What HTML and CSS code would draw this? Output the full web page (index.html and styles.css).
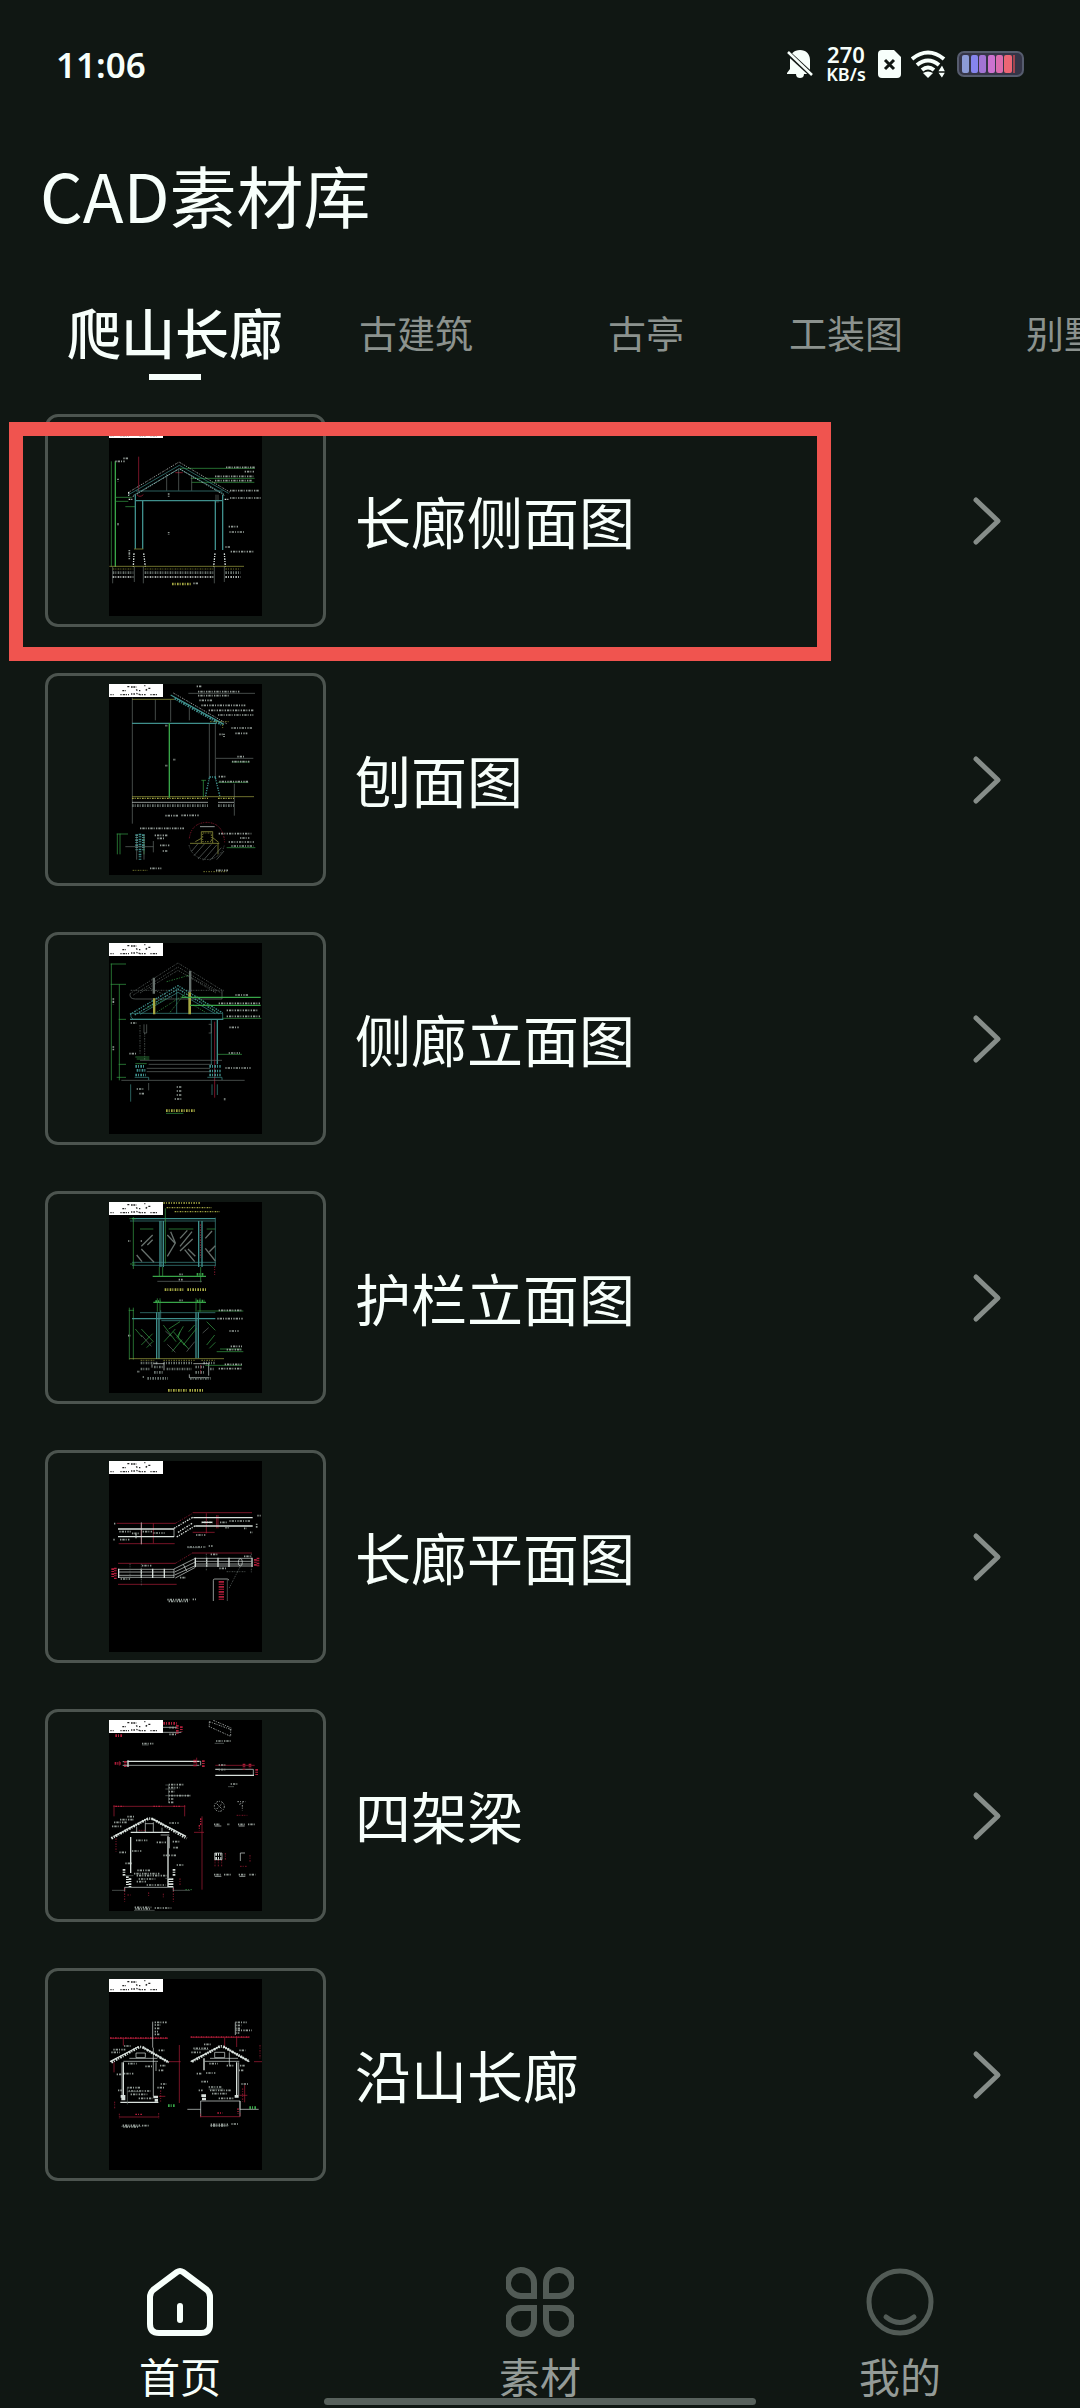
FILE: index.html
```
<!DOCTYPE html>
<html lang="zh-CN">
<head>
  <meta charset="UTF-8">
  <meta name="viewport" content="width=device-width, initial-scale=1.0">
  <title>CAD素材库</title>
  <link rel="stylesheet" href="styles.css">
</head>
<body>
  <svg class="defs" aria-hidden="true">
    <symbol id="stamp" viewBox="0 0 162 39">
      <rect width="162" height="39" fill="#fff"/>
      <path d="M55 8h8M66 9h16M106 5h3M40 20h10M82 16l4 6M90 20h4M110 19l6-4M118 13h8" stroke="#222" stroke-width="4" stroke-dasharray="5 2"/>
      <path d="M4 32h10M34 32h26M66 30h12M82 28l14 5M98 32h12M124 32h22" stroke="#333" stroke-width="4" stroke-dasharray="4 3 7 2"/>
    </symbol>
    <symbol id="arrow" viewBox="0 0 32 52">
      <path d="M5 5l22 21L5 47" fill="none" stroke="currentColor" stroke-width="5" stroke-linecap="round" stroke-linejoin="round"/>
    </symbol>
  </svg>

  <div class="status">
    <span class="time">11:06</span>
    <div class="status-icons">
      <svg class="bell" viewBox="0 0 26 30">
        <path d="M13 1c-6 0-10 4-10 10v9L0 24v1h9c0 3 2 4 4 4s4-1 4-4h6V11C23 5 19 1 13 1z" fill="#f7fffb"/>
        <path d="M-1 2l27 25" stroke="#101713" stroke-width="5"/>
        <path d="M1 3l24 23" stroke="#f7fffb" stroke-width="2.5"/>
      </svg>
      <div class="speed"><span>270</span><span class="unit">KB/s</span></div>
      <svg class="sim" viewBox="0 0 23 28">
        <path d="M4 0h12l7 7v17q0 4-4 4H4q-4 0-4-4V4q0-4 4-4z" fill="#f7fffb"/>
        <path d="M7 10l9 9M16 10l-9 9" stroke="#101713" stroke-width="3"/>
      </svg>
      <svg class="wifi" viewBox="0 0 36 28">
        <g fill="none" stroke="#f7fffb" stroke-width="4">
          <path d="M1 9q16-13 32 0"/>
          <path d="M6 15q11-9 22 0"/>
          <path d="M11 20q6-5 12 0"/>
        </g>
        <path d="M12 23q5-3 10 0l-5 5z" fill="#f7fffb"/>
        <path d="M26 22h9l-4-8zM26 22h9l-4 7z" fill="#f7fffb" stroke="#101713" stroke-width="1.5"/>
      </svg>
      <svg class="battery" viewBox="0 0 67 26">
        <rect x="1" y="1" width="65" height="24" rx="6" fill="#353547" stroke="#565c6e" stroke-width="2"/>
        <rect x="5" y="4" width="7" height="18" rx="2" fill="#8c9bd6"/>
        <rect x="14" y="4" width="7" height="18" rx="2" fill="#8585ee"/>
        <rect x="22" y="4" width="7" height="18" rx="2" fill="#a274d4"/>
        <rect x="31" y="4" width="7" height="18" rx="2" fill="#cc72d0"/>
        <rect x="39" y="4" width="7" height="18" rx="2" fill="#db6cae"/>
        <rect x="47" y="4" width="8" height="18" rx="2" fill="#ed6674"/>
        <rect x="56" y="4" width="2" height="18" fill="#a34450"/>
      </svg>
    </div>
  </div>

  <h1>CAD素材库</h1>

  <nav class="tabs">
    <button type="button" class="tab active">爬山长廊</button>
    <button type="button" class="tab">古建筑</button>
    <button type="button" class="tab">古亭</button>
    <button type="button" class="tab">工装图</button>
    <button type="button" class="tab">别墅</button>
  </nav>

  <main class="list">
    <a href="#" class="item">
      <span class="thumb">
        <svg viewBox="327 75 459 573">
          <rect x="327" y="75" width="459" height="573"/>
          <use href="#stamp" x="327" y="75" width="162" height="39"/>
          <path class="green bold" d="M346 184v316"/>
          <path class="green" d="M334 184v316M540 205h225M572 235h192M575 247h188M345 292h50M345 304h40M376 320h30"/>
          <path class="red" d="M416 170v104M526 218h22M410 284q10 10 20 0"/>
          <path class="gray" d="M500 222v50M536 210v62M575 226v46M648 284v24M654 284v24M338 500v50M403 500v46M430 500v50M643 500v50M673 500v46"/>
          <path class="teal" d="M386 284l152-88 148 84M400 286l138-80 134 76M408 273h260"/>
          <path class="white dots" d="M384 278l153-92 152 90M398 290l139-84 136 80"/>
          <path class="teal bold" d="M406 302h262M406 284v162M428 304v142M646 304v146M668 284v166"/>
          <path class="white dots bold" d="M386 276v14M386 298h14M674 298h14M402 460l-2 40M431 460l5 40M645 460l-4 40M673 460l3 40"/>
          <path class="yellow" d="M328 499h404M402 447h28"/>
          <path class="yellow dots" d="M338 507h62M434 507h206M676 507h46"/>
          <path class="gray dots wide" d="M338 518h62M434 518h206M676 518h46"/>
          <path class="white dots bold" d="M338 531h62M434 531h206M676 531h46"/>
          <path class="note" d="M678 202h87M734 215h30M645 229h115M645 242h110M690 272h88M690 294h92M686 380h30M688 396h44M676 441h14M692 455h68M370 175h14M346 184h30M354 236v8M354 370v8M388 450v30M506 280v10M506 396v8"/>
          <path class="yellow dots wide" d="M516 552h56"/>
          <path class="note" d="M580 550h14"/>
        </svg>
      </span>
      <span class="name">长廊侧面图</span>
      <svg class="arrow"><use href="#arrow"/></svg>
    </a>

    <a href="#" class="item">
      <span class="thumb">
        <svg viewBox="207 57 459 573">
          <rect x="207" y="57" width="459" height="573"/>
          <use href="#stamp" x="207" y="57" width="162" height="39"/>
          <path class="gray" d="M277 98v378M346 104v62M392 104v66M448 128v38M508 176v160M526 176v160M583 356v96M445 85h200M528 280h112"/>
          <path class="yellow" d="M276 103h126M276 395h366"/>
          <path class="teal bold" d="M276 175h254M392 90l160 88"/>
          <path class="teal dots wide" d="M404 100l140 78"/>
          <path class="white dots" d="M400 84l160 92"/>
          <path class="green bold" d="M388 174v224"/>
          <path class="green" d="M490 346v50M484 346h14M535 352h90M575 291h54M560 548h86"/>
          <path class="yellow dots bold" d="M276 400h228M534 400h48"/>
          <path class="white" d="M276 412h228M534 412h48"/>
          <path class="gray dots wide" d="M276 422h228M534 422h48"/>
          <path class="teal dots bold" d="M508 338l-12 58M526 338l14 58M508 336h20"/>
          <path class="note" d="M470 64h16M474 80h126M474 92h96M478 106h38M484 121h132M506 136h134M534 150h106M574 189h62M586 205h36M538 208h10M576 290h52M592 275h20M536 335h20M538 350h86M552 206v10M376 182h8M376 302h8M400 284h8"/>
          <path class="yellow dots" d="M510 170h56M548 178v14"/>
          <path class="note" d="M376 452h40M424 451h52M300 490h132M344 511h38M352 520h22M360 541h30M368 558h14M536 506h98M600 519h30M566 531h78M574 543h66"/>
          <path class="green" d="M232 506v62M240 506v62M230 507h34M312 514v54"/>
          <path class="teal dots wide" d="M290 508v48M300 506v78M310 508v48"/>
          <path class="gray" d="M256 545h84M340 528v34M290 508v76M312 508v76"/>
          <path class="yellow" d="M450 535h88M484 534v-34h34v34M534 534v34M466 530l18-10M536 532l-18-14"/>
          <path class="yellow dots" d="M488 504h26v26h-26zM278 616h46M490 620h70"/>
          <path class="white" d="M480 485h44"/>
          <path class="gray" d="M454 560l20-24M462 572l32-36M474 582l40-44M490 586l40-46M510 586l34-38M530 584l22-26"/>
          <path class="gray dots" d="M447 540a54 54 0 0 0 106 0"/>
          <path class="red dots" d="M448 520q6-46 52-48 50 2 54 60"/>
          <path class="note" d="M330 610h34M528 616h36"/>
        </svg>
      </span>
      <span class="name">刨面图</span>
      <svg class="arrow"><use href="#arrow"/></svg>
    </a>

    <a href="#" class="item">
      <span class="thumb">
        <svg viewBox="207 54 459 573">
          <rect x="207" y="54" width="459" height="573"/>
          <use href="#stamp" x="207" y="54" width="162" height="39"/>
          <path class="green" d="M214 116v350M238 178v288M212 117h46M212 178h46M236 283h22M236 418h22M230 457h28"/>
          <path class="gray dots" d="M270 206l144-92 136 84M280 210l134-84 130 78M300 204l114-68 114 68M272 196h280M330 190l70 30M440 150l90 50"/>
          <path class="gray" d="M270 206q-2 16 16 16h260v-24"/>
          <path class="gray bold" d="M340 158v48M343 158v48M449 138v64M452 138v64"/>
          <path class="teal dots bold" d="M270 268l144-86 134 82M284 270l130-78 124 74"/>
          <path class="teal" d="M300 268l114-66 112 64M272 265h276v18H280q-10-4-8-18M410 190v76"/>
          <path class="green dots" d="M320 250l60-30M350 262l90-58M390 262l40-50M470 214l60 48M380 170l70-20M460 240l40 24"/>
          <path class="yellow bold" d="M341 220v48M344 220v48M447 202v66M451 202v66"/>
          <path class="green bold" d="M424 217h238M450 241h212"/>
          <path class="green" d="M548 280h116M534 388h72"/>
          <path class="teal bold" d="M270 283h280M532 284v134"/>
          <path class="teal" d="M514 284v136"/>
          <path class="red" d="M524 290v228"/>
          <path class="gray" d="M320 298v26h-8v-26M506 298h8v26h-8M300 406h246M326 418h190M320 430h190M320 440h190M244 466h370M326 474v22"/>
          <path class="gray dots" d="M300 300v90M314 324v80"/>
          <path class="teal dots wide" d="M286 424h30M290 436h28M286 450h32M508 424h34M508 438h34M508 450h34"/>
          <path class="teal" d="M284 457h42v8M502 457h44v8M272 478v52M516 478v32M532 478v32"/>
          <path class="green" d="M286 396h42M290 402h38M286 416h34"/>
          <path class="note" d="M586 210h38M536 235h126M560 256h94M560 274h102M568 307h30M566 384h34M556 429h78M410 486h16M410 498h16M410 510h16M404 522h22M290 492h24M298 506h14M268 386h20M272 294h18M554 520v8M220 220v18M220 364v12"/>
          <path class="yellow dots wide" d="M378 557h90"/>
          <path class="green" d="M378 565h52"/>
        </svg>
      </span>
      <span class="name">侧廊立面图</span>
      <svg class="arrow"><use href="#arrow"/></svg>
    </a>

    <a href="#" class="item">
      <span class="thumb">
        <svg viewBox="207 51 459 573">
          <rect x="207" y="51" width="459" height="573"/>
          <use href="#stamp" x="207" y="51" width="162" height="39"/>
          <path class="yellow dots bold" d="M370 54h110M380 68h136M404 80h136"/>
          <path class="teal bold" d="M276 101h250M360 108v138M370 108v138M476 108v138M486 108v138"/>
          <path class="teal" d="M270 108h256M276 232h250M276 241h250M365 108v138M526 98v146"/>
          <path class="green" d="M280 96v156M268 101h20M376 70v166M270 237h16M300 132h40M386 132h74M500 132h26"/>
          <path class="gray bold" d="M304 184l34-34M304 192l38 40M322 180l16-16M392 140l14 34-24 40M382 150l24 26M420 160l22-24M420 184l36-44M420 198l38-36M434 194l30 36M444 192l22 22M496 160l20-22M496 190l30 38M508 200l18-18M290 210l16 20"/>
          <path class="green bold" d="M338 274h160M340 352h158"/>
          <path class="green" d="M358 246v30M368 246v30M482 246v46M352 340v40M360 340v40M468 340v40M480 340v40M268 368v156M280 368v156M266 376h16"/>
          <path class="gray" d="M352 289h134"/>
          <path class="green dots wide" d="M470 268h20M346 350h16M470 348h24"/>
          <path class="yellow dots wide" d="M374 314h60M442 314h60M384 616h56M448 616h44"/>
          <path class="teal bold" d="M276 401h250M350 382v140M357 382v140M468 382v138M475 382v138"/>
          <path class="teal" d="M300 383h226M362 376v24M364 407h108"/>
          <path class="green" d="M304 432l36 38M304 480l34-34M320 488l18-18M370 420l38 50M372 470l34-38M386 432l34-22M396 500l30-36M400 440l46 52M420 440l-6 20 24 24M430 424l-20 34M446 440l18-20M430 480l40-50M500 410l26 26M500 480l24-30M508 490l18-18M286 432l20 24"/>
          <path class="gray" d="M304 450l30 34M376 438l18 16M440 500l24-30M382 478l24 24M488 444l18-16"/>
          <path class="yellow" d="M268 521h284"/>
          <path class="yellow dots" d="M302 526h44M370 526h94M484 526h40"/>
          <path class="gray dots wide" d="M302 534h50M370 534h90M490 534h34M302 552h28M380 552h76M510 552h14"/>
          <path class="white" d="M336 538v10M340 536h32v20M460 536h46v36M448 568v10h60"/>
          <path class="gray dots wide" d="M342 546h28M342 562h28M322 580h62M466 546h30M466 562h30M450 580h62"/>
          <path class="green" d="M472 378h138M530 500h80M496 541h110M540 492h64"/>
          <path class="note" d="M536 376h70M532 401h76M568 438h30M572 484h34M560 494h44M554 538h52M536 551h70M418 268h10M416 284h12M418 346h10M264 168h8M302 168h6M264 452h8M292 560h8M308 576h4"/>
          <path class="red dots" d="M482 118v100M524 244v30M482 540v30"/>
        </svg>
      </span>
      <span class="name">护栏立面图</span>
      <svg class="arrow"><use href="#arrow"/></svg>
    </a>

    <a href="#" class="item">
      <span class="thumb">
        <svg viewBox="207 48 459 573">
          <rect x="207" y="48" width="459" height="573"/>
          <use href="#stamp" x="207" y="48" width="162" height="39"/>
          <path class="red" d="M230 235h176M458 203h178M236 296h168M458 262h66M234 355h172M234 418h176M456 324h180M304 235v60M340 235v60M499 205v60M530 210v40M534 210v40"/>
          <path class="red dots" d="M406 235l52-30M406 355l50-30"/>
          <path class="white bold" d="M234 252h168M234 275h168M460 218h178M466 243h172"/>
          <path class="white dots bold" d="M402 250l58-34M410 276l56-34M414 262l44-28"/>
          <path class="white" d="M402 252v24M304 232v66"/>
          <path class="note" d="M238 260h34M276 265h24M308 260h30M340 264h34M240 284h30M288 268v12M484 232h34M540 232h24M568 228h64M556 248h10M612 250h8M468 270h28M222 236h6M220 284h6M652 212h10M650 236v12M630 262h8"/>
          <path class="white bold" d="M486 232h30"/>
          <path class="note" d="M442 306h56M506 303h12"/>
          <path class="gray" d="M442 308h40"/>
          <path class="white" d="M234 373h168M234 381h168M234 391h168M234 397h168M464 340h172M464 349h172M464 357h172M464 363h172"/>
          <path class="white bold" d="M236 371v28M304 371v28M338 371v28M373 371v28M466 338v28M500 338v28M534 338v28M567 338v28M636 338v28"/>
          <path class="white" d="M402 372l64-32M404 381l62-30M404 390l62-28M406 399l60-32M402 372v26M430 358l10 20"/>
          <ellipse class="white" cx="601" cy="352" rx="6" ry="11"/>
          <path class="gray dots" d="M270 356v46M304 356v66M499 326v50M634 326v60M600 366l-34 66M560 380h60"/>
          <path class="note" d="M306 362h30M512 328h20M242 402h28M420 398h18M538 370h24M612 334h22"/>
          <path class="red dots wide" d="M218 370v30M226 368v34M654 338v30M646 342v20"/>
          <path class="white" d="M520 468v-62q0-4 4-4h38q4 0 4 4"/>
          <path class="gray" d="M562 404v64"/>
          <path class="red dots wide" d="M540 408v60M548 408v60"/>
          <path class="note" d="M382 464h66M386 469h58M458 463h10"/>
        </svg>
      </span>
      <span class="name">长廊平面图</span>
      <svg class="arrow"><use href="#arrow"/></svg>
    </a>

    <a href="#" class="item">
      <span class="thumb">
        <svg viewBox="207 45 459 573">
          <rect x="207" y="45" width="459" height="573"/>
          <use href="#stamp" x="207" y="45" width="162" height="39"/>
          <path class="white" d="M368 67h44M368 82h56"/>
          <path class="red dots wide" d="M370 55h40M412 60v26M424 64v16M226 92h22"/>
          <path class="note" d="M306 116h34M388 68h20M388 88h24M528 108h44"/>
          <path class="gray" d="M524 115h28M306 120h20"/>
          <path class="white dots" d="M508 50l66 24M506 64l66 30M508 50v14M572 72v22M520 46l56 24"/>
          <path class="white bold" d="M266 169h212M526 211h116M264 166v20"/>
          <path class="white" d="M248 170h18M248 181h230M478 169h4v12M526 193h114v18M526 193h12"/>
          <path class="red dots wide" d="M224 175h18M256 168v18M464 164v20M490 166v20M612 176v18M630 176v16M650 192v18"/>
          <path class="red" d="M526 181h118M238 168v14M470 158v26"/>
          <path class="note" d="M536 180h20M536 194h20M572 237h20"/>
          <path class="gray" d="M564 245h18M376 240h10v54M376 252h30M376 272h74"/>
          <path class="note" d="M386 239h46M386 248h32M386 260h18M386 272h66M386 282h16M386 292h16"/>
          <path class="red" d="M220 304h216M222 300v34M434 300v34M486 334v220M462 382h30"/>
          <path class="red dots bold" d="M226 304h24M340 304h24M400 304h20M482 340v20M478 360v16"/>
          <path class="white dots wide" d="M214 400l104-56q12-6 24 0l98 56"/>
          <path class="white bold" d="M222 394l98-52M334 340l104 54"/>
          <path class="white bold" d="M272 382h116M384 394v152M272 396v108"/>
          <path class="white" d="M316 352v30M340 352v30M316 356h24M290 366v16M366 368v14M362 390h26M388 396v34M254 547h146M254 547v12M400 547v12"/>
          <path class="note" d="M262 335h24M240 344h42M222 352h38M216 364h30M388 354h28M288 406h34M350 412h28M398 410h24M238 442h20M276 438h30M400 428h16M370 451h38M410 480h22M256 475h24M292 496h40M282 506h76M290 512h90M296 522h50M290 530h28M320 540h56"/>
          <path class="red dots" d="M228 400v40M254 550v40M400 550v40M262 570h10M326 562v14M370 566v12M420 520v20M296 376h20"/>
          <path class="white dots wide" d="M252 492v20M402 492v20M262 514v30M270 520v26M388 520v26M396 520v26"/>
          <path class="gray" d="M216 556h38M400 556h50M252 512h28M376 520h20M282 616h62"/>
          <path class="green dots" d="M436 554h20"/>
          <path class="note" d="M284 607h50M286 612h44M344 609h50"/>
          <circle class="white dots" cx="538" cy="304" r="15"/>
          <path class="white dots" d="M530 296l16 16M530 312l16-16M592 290h24M598 298l14-6M607 300v16"/>
          <path class="red dots" d="M590 331h32M525 464v22M535 464v22M545 464v22M556 444v20M600 484h20M630 450v20"/>
          <path class="note" d="M522 358h18M562 358h8M594 358h20M624 358h20M522 509h22M552 509h20M596 509h20M628 509h18"/>
          <path class="white dots wide" d="M526 448h18M526 460h18"/>
          <path class="white" d="M524 444h22v20h-22zM601 444v24M601 444h14M524 363h20M596 363h18M524 514h20M598 514h18"/>
        </svg>
      </span>
      <span class="name">四架梁</span>
      <svg class="arrow"><use href="#arrow"/></svg>
    </a>

    <a href="#" class="item">
      <span class="thumb">
        <svg viewBox="207 42 459 573">
          <rect x="207" y="42" width="459" height="573"/>
          <use href="#stamp" x="207" y="42" width="162" height="39"/>
          <path class="red" d="M210 220h174M452 217h176M418 240v174M386 290h36M250 222v20M554 218v30M590 218v28M642 290h26M238 456h120M480 455h120M614 360v52M222 292v30M356 394h20M598 391h24"/>
          <path class="red dots bold" d="M210 219h174M452 216h176M286 448h20M532 444h16M594 430v16"/>
          <path class="white" d="M338 170v78M586 172v38"/>
          <path class="note" d="M344 172h36M344 180h18M344 190h16M344 200h10M344 208h14M586 172h34M586 181h18M586 190h14M586 196h50M586 204h12"/>
          <path class="white dots wide" d="M214 292l80-44q8-4 16 0l76 44M456 290l80-44q8-4 16 0l74 42"/>
          <path class="white bold" d="M210 290l84-44M308 246l78 46M452 290l84-44M552 246l76 44"/>
          <path class="white" d="M268 280h84M250 289h104M288 264h28v14h-28zM510 280h84M494 289h104M524 262h30v16h-30z"/>
          <path class="white bold" d="M250 292v100M241 412h114M492 280v36M590 292v98"/>
          <path class="white" d="M340 248v146M348 292v26M246 292v100M596 292v98M568 262v38M482 408h118v46M482 408v46M600 408v26M442 433h40M600 433h56"/>
          <path class="white wide" d="M242 394h14M244 402h12M340 396h14M344 406h10M484 392h14M486 402h12M584 394h12"/>
          <path class="note" d="M252 243h22M220 254h36M214 262h26M356 256h18M360 302h18M356 316h14M264 296h26M316 304h20M252 326h30M230 328h14M262 368h38M266 378h66M272 388h50M296 400h42M362 357h18M352 368h20M234 376h12M492 238h24M460 250h44M454 262h30M598 256h18M600 302h16M596 316h14M508 296h26M560 302h22M498 324h28M470 326h14M484 350h20M506 366h40M510 376h64M516 386h48M536 400h44M604 357h20M476 376h12"/>
          <path class="gray" d="M262 368v50M262 380h40M462 254h44M506 372h44M244 484h60M510 482h56"/>
          <path class="red dots" d="M224 410v20M238 446v16M356 444v16M482 446v14M600 444v14M608 370v40M362 376v34M660 240v40"/>
          <path class="green dots wide" d="M384 422h22M628 428h20"/>
          <path class="note" d="M248 481h52M250 486h48M512 478h54M512 483h50M306 482h24M574 477h22"/>
        </svg>
      </span>
      <span class="name">沿山长廊</span>
      <svg class="arrow"><use href="#arrow"/></svg>
    </a>

    <div class="highlight"></div>
  </main>

  <nav class="bottom-nav">
    <a href="#" class="active">
      <svg viewBox="0 0 68 70" fill="none" stroke="currentColor" stroke-width="6" stroke-linecap="round" stroke-linejoin="round">
        <path d="M31 5L7 23q-3 3-3 7v27q0 9 9 9h42q9 0 9-9V30q0-4-3-7L37 5q-3-2-6 0z"/>
        <path d="M34 39v14"/>
      </svg>
      <span>首页</span>
    </a>
    <a href="#">
      <svg class="dim" viewBox="0 0 68 70" fill="none" stroke="currentColor" stroke-width="6">
        <path d="M28 29H16A13 13 0 1 1 28 16zM40 29h12A13 13 0 1 0 40 16zM28 41H16A13 13 0 1 0 28 54zM40 41h12A13 13 0 1 1 40 54z"/>
      </svg>
      <span>素材</span>
    </a>
    <a href="#">
      <svg class="dim" viewBox="0 0 68 70" fill="none" stroke="currentColor" stroke-width="5" stroke-linecap="round">
        <circle cx="34" cy="35" r="31"/>
        <path d="M20 50q14 11 28 0"/>
      </svg>
      <span>我的</span>
    </a>
    <div class="home-bar"></div>
  </nav>
</body>
</html>
```

FILE: styles.css
```
* {
  box-sizing: border-box;
}
body {
  margin: 0;
  min-height: 100vh;
  display: flex;
  flex-direction: column;
  background-color: #101713;
  color: #f7fffb;
  font-family: "Noto Sans CJK SC", sans-serif;
  overflow-x: hidden;
}
a {
  color: inherit;
  text-decoration: none;
}
svg {
  display: block;
  flex: none;
}
.defs {
  position: absolute;
  width: 0;
  height: 0;
}

/* status bar */
.status {
  display: flex;
  justify-content: space-between;
  align-items: center;
  height: 128px;
  padding: 0 56px;
  font-family: "Noto Sans", sans-serif;
  font-weight: 600;
}
.time {
  font-size: 35px;
}
.status-icons {
  display: flex;
  align-items: center;
  gap: 10px;
}
.bell {
  width: 28px;
  height: 30px;
}
.speed {
  display: flex;
  flex-direction: column;
  align-items: center;
  width: 44px;
  font-size: 22px;
  line-height: 20px;
}
.unit {
  font-size: 18px;
}
.sim {
  width: 23px;
  height: 28px;
}
.wifi {
  width: 36px;
  height: 28px;
}
.battery {
  width: 67px;
  height: 26px;
}

h1 {
  margin: 26px 0 0;
  padding: 0 40px;
  font-size: 67px;
  font-weight: 400;
  line-height: 80px;
}

/* category tabs */
.tabs {
  display: grid;
  grid-template-columns: 250px 232px 228px 172px 264px;
  height: 92px;
  margin-top: 54px;
  padding-left: 50px;
  overflow: hidden;
}
.tab {
  position: relative;
  padding: 0 0 6px;
  border: 0;
  background: none;
  color: #8b928e;
  font-family: inherit;
  font-size: 38px;
  white-space: nowrap;
}
.tab.active {
  color: #f7fffb;
  font-size: 54px;
  font-weight: 500;
}
.tab.active::after {
  content: "";
  position: absolute;
  left: 50%;
  bottom: 0;
  width: 52px;
  height: 6px;
  margin-left: -26px;
  background-color: #f7fffb;
}

/* drawings */
.list {
  position: relative;
  display: flex;
  flex-direction: column;
  gap: 46px;
  margin-top: 34px;
  padding: 0 77px 0 45px;
}
.item {
  display: flex;
  align-items: center;
  gap: 29px;
}
.thumb {
  display: flex;
  justify-content: center;
  width: 281px;
  padding: 8px 0;
  border: 3px solid #4c544f;
  border-radius: 13px;
}
.thumb svg {
  width: 153px;
  height: 191px;
}
.thumb path,
.thumb circle,
.thumb ellipse {
  fill: none;
  stroke-width: 2;
}
.thumb .green { stroke: #38a548; }
.thumb .teal { stroke: #3f8f8c; }
.thumb .gray { stroke: #66706c; }
.thumb .white { stroke: #d8e0dc; }
.thumb .yellow { stroke: #a5a843; }
.thumb .red { stroke: #b01e3a; }
.thumb .dots { stroke-dasharray: 5 3 3 4; }
.thumb .bold { stroke-width: 4; }
.thumb .wide { stroke-width: 8; }
.thumb .note {
  stroke: #8f9893;
  stroke-width: 5;
  stroke-dasharray: 4 3 7 3 3 4;
}
.name {
  flex: 1;
  padding-bottom: 2px;
  font-size: 56px;
  line-height: 80px;
}
.arrow {
  width: 32px;
  height: 52px;
  color: #868d89;
}
.highlight {
  position: absolute;
  top: 8px;
  left: 9px;
  width: 822px;
  height: 239px;
  border: 14px solid #f0544f;
  pointer-events: none;
}

/* bottom navigation */
.bottom-nav {
  position: relative;
  display: grid;
  grid-template-columns: repeat(3, 1fr);
  margin-top: auto;
  padding-bottom: 5px;
}
.bottom-nav a {
  display: flex;
  flex-direction: column;
  align-items: center;
  gap: 10px;
  color: #949b97;
  font-size: 41px;
  line-height: 56px;
}
.bottom-nav a.active {
  color: #f7fffb;
}
.bottom-nav svg {
  width: 68px;
  height: 70px;
}
.bottom-nav .dim {
  color: #525b56;
}
.home-bar {
  position: absolute;
  left: 30%;
  right: 30%;
  bottom: 3px;
  height: 7px;
  border-radius: 4px;
  background-color: #58615c;
}
```
